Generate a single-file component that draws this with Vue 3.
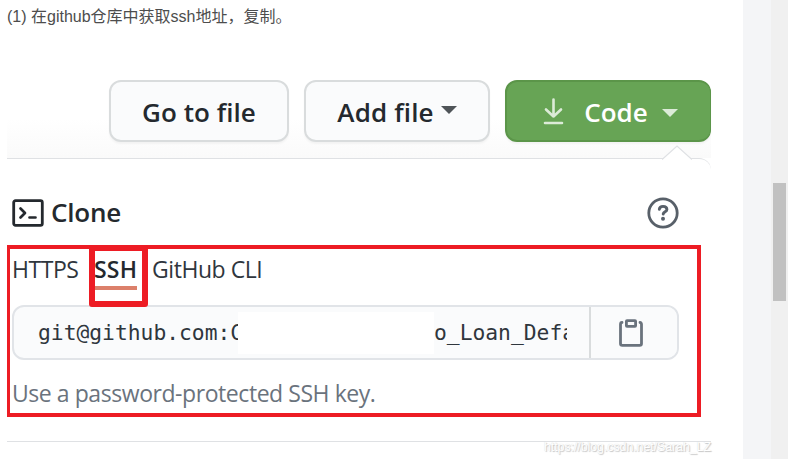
<script setup>
import { ref } from 'vue'

const tabs = ['HTTPS', 'SSH', 'GitHub CLI']
const active = ref('SSH')
</script>

<template>
  <div class="page">
    <main class="article">
      <p class="step">(1) 在github仓库中获取ssh地址，复制。</p>

      <section class="figure">
        <div class="toolbar">
          <button class="btn go"><span>Go to file</span></button>
          <button class="btn add"><span>Add file</span><i class="caret"></i></button>
          <button class="btn code">
            <svg class="download" width="22" height="28" viewBox="0 0 22 28" fill="none" stroke="currentColor" stroke-width="2.6" stroke-linecap="round" stroke-linejoin="round">
              <path d="M10.500 2.500v17M3 12.500l7.500 7L18 12.500M2 26h17" />
            </svg>
            <span>Code</span><i class="caret"></i>
          </button>
        </div>

        <div class="panel">
          <svg class="pointer" width="30" height="16" viewBox="0 0 30 16">
            <path d="M0 15L15 1L30 15V16H0Z" fill="#fff" />
            <path d="M0 14.500L15 1L30 14.500" fill="none" stroke="#dfe1e4" stroke-width="1.300" />
          </svg>
          <header class="clone">
            <svg width="32" height="28" viewBox="0 0 32 28" fill="none" stroke="#24292e" stroke-width="2.8" stroke-linecap="round" stroke-linejoin="round">
              <rect x="1.700" y="1.700" width="28.600" height="24.600" rx="1.800" />
              <path d="M8.500 9.500l4.500 4.500l-4.500 4.500M17.500 18.500h6" stroke-width="2.700" />
            </svg>
            <h2>Clone</h2>
            <svg class="help" width="32" height="32" viewBox="0 0 32 32" fill="none" stroke="#586069" stroke-linecap="round" stroke-linejoin="round">
              <circle cx="16" cy="16" r="14.200" stroke-width="2.800" />
              <path d="M12.300 12.300c.3-2 1.700-2.900 3.700-2.900c2.300 0 3.900 1.200 3.900 3.100c0 2.300-3.400 2.300-3.700 4.500" stroke-width="2.900" />
              <circle cx="16" cy="21.800" r="2" fill="#586069" stroke="none" />
            </svg>
          </header>

          <div class="marked">
            <nav class="tabs">
              <a
                v-for="tab in tabs"
                :key="tab"
                class="tab"
                :class="{ active: tab === active }"
                @click="active = tab"
              >{{ tab }}</a>
              <i class="mark"></i>
            </nav>
            <div class="field">
              <div class="url">
                <span class="start">git@github.com:C</span>
                <i class="hidden-part"></i>
                <span class="end">o_Loan_Defa</span>
              </div>
              <button class="copy">
                <svg width="24" height="28" viewBox="0 0 24 28" fill="none" stroke="#6a737d" stroke-width="2.800" stroke-linecap="round" stroke-linejoin="round">
                  <path d="M3 3.500Q1.500 3.500 1.500 5.500V24.500Q1.500 26.300 3.300 26.300H20.700Q22.500 26.300 22.500 24.500V5.500Q22.500 3.500 21 3.500" />
                  <rect x="7.400" y="1.700" width="9.200" height="5.700" rx=".6" />
                </svg>
              </button>
            </div>
            <p class="hint">Use a password-protected SSH key.</p>
          </div>
          <div class="rule"></div>
          <span class="watermark">https://blog.csdn.net/Sarah_LZ</span>
        </div>
      </section>
    </main>
    <aside class="gutter"></aside>
    <div class="scrollbar"><div class="thumb"></div></div>
  </div>
</template>

<style>
body { margin: 0; background: #fff; overflow: hidden; }
</style>

<style scoped>
* { box-sizing: border-box; }
.page { display: flex; width: 788px; height: 459px; overflow: hidden; font-family: "Open Sans", "Noto Sans", sans-serif; color: #24292e; }
.article { width: 743px; padding-left: 7px; background: #fff; }
.gutter { width: 28px; background: #f4f5f7; }
.scrollbar { width: 17px; padding: 183px 2px 0; background: #f0f0f0; }
.thumb { height: 118px; background: #c1c1c1; }
.step { height: 60px; margin: 0; padding-top: 5px; font: 16px/24px "Liberation Sans", "Noto Sans CJK SC", sans-serif; color: #4d4d4d; white-space: nowrap; }
.figure { width: 704px; height: 399px; }
.toolbar { display: flex; height: 98px; padding: 20px 0 0 102px; background: linear-gradient(#fff 60%, #fafafa); }
.btn { display: flex; align-items: center; height: 62px; margin: 0 15px 0 0; padding: 0; border: 2px solid #d9dcdd; border-radius: 12px; background: #fafbfc; box-shadow: 0 2px 2px #1b1f230a; font: 600 26px/36px "Open Sans", sans-serif; color: #24292e; white-space: nowrap; flex-shrink: 0; }
.btn span { position: relative; top: 1px; }
.go { width: 180px; padding-left: 31px; letter-spacing: .05px; }
.add { width: 186px; padding-left: 31px; letter-spacing: .15px; }
.add span { width: 97px; }
.code { width: 206px; margin: 0; padding-left: 36px; border-color: #5b9549; border-right-width: 1px; background: #67a455; color: #fff; letter-spacing: 0; }
.code span { width: 64px; }
.caret { width: 0; height: 0; border: 8px solid transparent; border-bottom: 0; border-top-color: #4f5458; margin: -3px 0 0 7px; }
.code .caret { border-top-color: #dcebd8; margin: 3px 0 0 14px; }
.download { color: #dcebd8; margin-right: 19px; }
.panel { position: relative; height: 301px; border-top: 1px solid #dfe1e4; border-radius: 0 12px 0 0; background: #fff; }
.pointer { position: absolute; left: 655px; top: -14px; }
.clone { display: flex; align-items: center; height: 86px; padding: 22px 32px 0 5px; }
.clone h2 { margin: -2px 0 0 7px; font-size: 26px; line-height: 36px; font-weight: 600; letter-spacing: -.2px; }
.help { margin-left: auto; }
.marked { width: 694px; height: 172px; border: 4px solid #ed1c24; border-left-width: 3px; padding-left: 2px; }
.tabs { position: relative; display: flex; height: 56px; }
.tab { height: 41px; margin-right: 16px; font-size: 23px; line-height: 41px; letter-spacing: -.45px; color: #2f363d; white-space: nowrap; }
.tab:first-child { width: 66px; }
.tab.active { width: 43px; margin-right: 15px; border-bottom: 4px solid #dc806b; font-weight: 600; letter-spacing: .2px; color: #24292e; }
.mark { position: absolute; left: 77px; top: -4px; width: 59px; height: 62px; border: 6px solid #ed1c24; border-radius: 3px; }
.field { display: flex; width: 667px; height: 55px; border: 2px solid #e1e4e8; border-radius: 12px; background: #fafbfc; overflow: hidden; }
.url { display: flex; align-items: center; width: 553px; padding-left: 24px; font: 21.3px/40px "DejaVu Sans Mono", monospace; color: #2f363d; white-space: pre; overflow: hidden; flex-shrink: 0; }
.start { width: 200px; overflow: hidden; flex-shrink: 0; }
.hidden-part { width: 196px; height: 42px; background: #fff; flex-shrink: 0; }
.end { width: 133px; overflow: hidden; flex-shrink: 0; }
.copy { flex: 1; margin: 0 0 0 22px; padding: 0 7px 0 0; border: 0; border-left: 2px solid #d9dcdd; background: #fafbfc; display: flex; align-items: center; justify-content: center; }
.hint { margin: 15px 0 0; font-size: 23px; line-height: 36px; letter-spacing: -.44px; color: #6a737d; white-space: nowrap; }
.rule { height: 1px; margin-top: 24px; background: #dfe1e4; }
.watermark { position: absolute; left: 537px; top: 280px; font: 12.4px/16px "Liberation Sans", sans-serif; letter-spacing: -.06px; color: #fff; text-shadow: 1px 1px 1px #c4c4c4, 0 0 1px #d4d4d4; white-space: nowrap; }
</style>
